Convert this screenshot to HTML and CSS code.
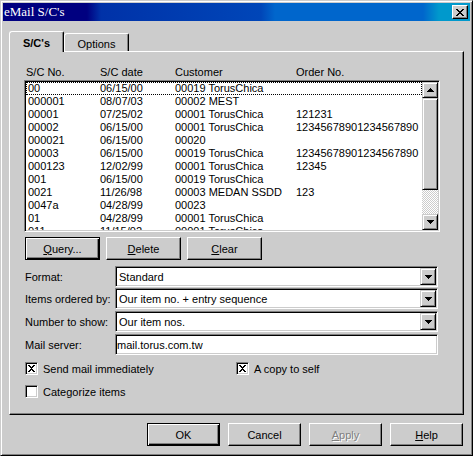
FILE: index.html
```html
<!DOCTYPE html>
<html>
<head>
<meta charset="utf-8">
<title>eMail S/C's</title>
<link rel="stylesheet" href="styles.css">
</head>
<body>
<div class="window">
  <div class="titlebar">
    <span class="title">eMail S/C's</span>
    <div class="close">
      <svg width="8" height="7" viewBox="0 0 8 7" shape-rendering="crispEdges"><path d="M0 0h2v1h1v1h2v-1h1v-1h2v1h-1v1h-1v1h-1v1h1v1h1v1h1v1h-2v-1h-1v-1h-2v1h-1v1h-2v-1h1v-1h1v-1h1v-1h-1v-1h-1v-1h-1z" fill="#000"/></svg>
    </div>
  </div>
  <div class="content">
    <div class="tabs">
      <div class="tab active">S/C's</div>
      <div class="tab">Options</div>
    </div>
    <div class="panel">
      <div class="list-header">
        <span>S/C No.</span><span>S/C date</span><span>Customer</span><span>Order No.</span>
      </div>
      <div class="listbox">
        <div class="rows">
          <div class="row focus"><span>00</span><span>06/15/00</span><span>00019 TorusChica</span><span></span></div>
          <div class="row"><span>000001</span><span>08/07/03</span><span>00002 MEST</span><span></span></div>
          <div class="row"><span>00001</span><span>07/25/02</span><span>00001 TorusChica</span><span>121231</span></div>
          <div class="row"><span>00002</span><span>06/15/00</span><span>00001 TorusChica</span><span>12345678901234567890</span></div>
          <div class="row"><span>000021</span><span>06/15/00</span><span>00020</span><span></span></div>
          <div class="row"><span>00003</span><span>06/15/00</span><span>00019 TorusChica</span><span>12345678901234567890</span></div>
          <div class="row"><span>000123</span><span>12/02/99</span><span>00001 TorusChica</span><span>12345</span></div>
          <div class="row"><span>001</span><span>06/15/00</span><span>00019 TorusChica</span><span></span></div>
          <div class="row"><span>0021</span><span>11/26/98</span><span>00003 MEDAN SSDD</span><span>123</span></div>
          <div class="row"><span>0047a</span><span>04/28/99</span><span>00023</span><span></span></div>
          <div class="row"><span>01</span><span>04/28/99</span><span>00001 TorusChica</span><span></span></div>
          <div class="row"><span>011</span><span>11/15/02</span><span>00001 TorusChica</span><span></span></div>
        </div>
        <div class="vscroll">
          <div class="sbtn"><svg width="7" height="4" viewBox="0 0 7 4" shape-rendering="crispEdges"><path d="M3 0h1v1h1v1h1v1h1v1h-7v-1h1v-1h1v-1h1z" fill="#000"/></svg></div>
          <div class="thumb"></div>
          <div class="track"></div>
          <div class="sbtn"><svg width="7" height="4" viewBox="0 0 7 4" shape-rendering="crispEdges"><path d="M0 0h7v1h-1v1h-1v1h-1v1h-1v-1h-1v-1h-1v-1h-1z" fill="#000"/></svg></div>
        </div>
      </div>
      <div class="btnrow">
        <div class="btn default"><span><u>Q</u>uery...</span></div>
        <div class="btn"><span><u>D</u>elete</span></div>
        <div class="btn"><span><u>C</u>lear</span></div>
      </div>
      <div class="field-row r1">
        <span class="label">Format:</span>
        <div class="combo"><span class="val">Standard</span><span class="drop"><svg width="7" height="4" viewBox="0 0 7 4" shape-rendering="crispEdges"><path d="M0 0h7v1h-1v1h-1v1h-1v1h-1v-1h-1v-1h-1v-1h-1z" fill="#000"/></svg></span></div>
      </div>
      <div class="field-row r2">
        <span class="label">Items ordered by:</span>
        <div class="combo"><span class="val">Our item no. + entry sequence</span><span class="drop"><svg width="7" height="4" viewBox="0 0 7 4" shape-rendering="crispEdges"><path d="M0 0h7v1h-1v1h-1v1h-1v1h-1v-1h-1v-1h-1v-1h-1z" fill="#000"/></svg></span></div>
      </div>
      <div class="field-row r3">
        <span class="label">Number to show:</span>
        <div class="combo"><span class="val">Our item nos.</span><span class="drop"><svg width="7" height="4" viewBox="0 0 7 4" shape-rendering="crispEdges"><path d="M0 0h7v1h-1v1h-1v1h-1v1h-1v-1h-1v-1h-1v-1h-1z" fill="#000"/></svg></span></div>
      </div>
      <div class="field-row r4">
        <span class="label">Mail server:</span>
        <div class="textbox">mail.torus.com.tw</div>
      </div>
      <div class="check-row c1">
        <div class="check left"><span class="box"><svg width="9" height="9" viewBox="0 0 9 9" shape-rendering="crispEdges"><path d="M1 1h2v1h1v1h1v-1h1v-1h2v1h-1v1h-1v1h-1v1h1v1h1v1h1v1h-2v-1h-1v-1h-1v1h-1v1h-2v-1h1v-1h1v-1h1v-1h-1v-1h-1v-1h-1z" fill="#000"/></svg></span><span>Send mail immediately</span></div>
        <div class="check"><span class="box"><svg width="9" height="9" viewBox="0 0 9 9" shape-rendering="crispEdges"><path d="M1 1h2v1h1v1h1v-1h1v-1h2v1h-1v1h-1v1h-1v1h1v1h1v1h1v1h-2v-1h-1v-1h-1v1h-1v1h-2v-1h1v-1h1v-1h1v-1h-1v-1h-1v-1h-1z" fill="#000"/></svg></span><span>A copy to self</span></div>
      </div>
      <div class="check-row c2">
        <div class="check left"><span class="box"></span><span>Categorize items</span></div>
      </div>
    </div>
    <div class="footer">
      <div class="btn default"><span>OK</span></div>
      <div class="btn"><span>Cancel</span></div>
      <div class="btn disabled"><span><u>A</u>pply</span></div>
      <div class="btn"><span><u>H</u>elp</span></div>
    </div>
  </div>
</div>
</body>
</html>
```
FILE: styles.css
```css
* { box-sizing: border-box; }

body {
  margin: 0;
  background: #cccccc;
  font-family: "Liberation Sans", Arial, sans-serif;
  font-size: 11px;
  color: #000;
}

.window {
  width: 473px;
  height: 456px;
  background: #cccccc;
  border: 1px solid;
  border-color: #cccccc #000 #000 #cccccc;
  box-shadow: inset 1px 1px #fff, inset -1px -1px #808080;
  padding: 2px;
  display: flex;
  flex-direction: column;
}

.titlebar {
  height: 18px;
  display: flex;
  align-items: center;
  justify-content: space-between;
  padding: 0 2px 0 1px;
  background: linear-gradient(to right,
    #000080 0px, #000080 84px, #0032a8 98px, #0046b8 258px,
    #0066cc 272px, #0066cc 420px, #0099cc 436px, #0099cc 100%);
}

.title {
  font-family: "Liberation Serif", "Times New Roman", serif;
  font-size: 13px;
  color: #fff;
  line-height: 18px;
}

.close {
  width: 16px;
  height: 14px;
  background: #cccccc;
  border: 1px solid;
  border-color: #fff #000 #000 #fff;
  box-shadow: inset -1px -1px #808080;
  display: flex;
  align-items: center;
  justify-content: center;
  padding-left: 0;
}

.content {
  padding: 10px 6px 0 6px;
  display: flex;
  flex-direction: column;
}

.tabs {
  display: flex;
  align-items: flex-end;
  height: 20px;
  position: relative;
  z-index: 1;
}

.tab {
  height: 18px;
  width: 65px;
  background: #cccccc;
  border: 1px solid;
  border-bottom: none;
  border-color: #fff #000 #000 #fff;
  box-shadow: inset -1px 0 #808080;
  border-radius: 3px 2px 0 0;
  display: flex;
  align-items: center;
  justify-content: center;
  padding-top: 2px;
}

.tab.active {
  width: 55px;
  height: 21px;
  margin-bottom: -1px;
  font-weight: bold;
  padding-top: 1px;
}

.panel {
  height: 364px;
  border: 1px solid;
  border-color: #fff #000 #000 #fff;
  box-shadow: inset -1px -1px #808080;
  padding: 14px 0 0 14px;
  display: flex;
  flex-direction: column;
}

.list-header {
  display: grid;
  grid-template-columns: 74px 75px 121px 1fr;
  padding-left: 2px;
  height: 13px;
  line-height: 13px;
}

.listbox {
  margin-top: 1px;
  width: 416px;
  height: 152px;
  border: 1px solid;
  border-color: #808080 #fff #fff #808080;
  box-shadow: inset 1px 1px #000, inset -1px -1px #cccccc;
  padding: 1px;
  display: flex;
  background: #fff;
}

.rows {
  flex: 1;
  overflow: hidden;
}

.row {
  display: grid;
  grid-template-columns: 72px 75px 121px 1fr;
  padding-left: 2px;
  height: 13px;
  line-height: 13px;
  white-space: nowrap;
}

.row.focus {
  outline: 1px dotted #000;
  outline-offset: -1px;
}

.vscroll {
  width: 16px;
  display: flex;
  flex-direction: column;
}

.sbtn, .thumb {
  background: #cccccc;
  border: 1px solid;
  border-color: #cccccc #000 #000 #cccccc;
  box-shadow: inset 1px 1px #fff, inset -1px -1px #808080;
}

.sbtn {
  height: 16px;
  display: flex;
  align-items: center;
  justify-content: center;
}

.thumb {
  height: 92px;
}

.track {
  flex: 1;
  background: repeating-conic-gradient(#fff 0 25%, #cccccc 0 50%) 0 0 / 2px 2px;
}

.btnrow {
  display: flex;
  gap: 6px;
  margin-top: 5px;
  margin-left: 1px;
}

.btn {
  width: 75px;
  height: 23px;
  background: #cccccc;
  border: 1px solid;
  border-color: #fff #000 #000 #fff;
  box-shadow: inset -1px -1px #808080;
  display: flex;
  align-items: center;
  justify-content: center;
}

.btn.default {
  border-color: #000;
  box-shadow: inset 1px 1px #fff, inset -1px -1px #000, inset -2px -2px #808080;
}

.btn.disabled {
  color: #808080;
  text-shadow: 1px 1px #fff;
}

.field-row {
  display: flex;
  align-items: center;
  height: 21px;
}

.field-row.r1 { margin-top: 6px; }
.field-row.r2 { margin-top: 1px; }
.field-row.r3 { margin-top: 2px; }
.field-row.r4 { margin-top: 2px; }

.label {
  width: 91px;
  padding-left: 1px;
}

.combo, .textbox {
  width: 323px;
  height: 21px;
  background: #fff;
  border: 1px solid;
  border-color: #808080 #fff #fff #808080;
  box-shadow: inset 1px 1px #000, inset -1px -1px #cccccc;
  padding: 1px;
  display: flex;
  align-items: center;
}

.combo .val {
  flex: 1;
  padding-left: 2px;
}

.drop {
  width: 16px;
  height: 17px;
  background: #cccccc;
  border: 1px solid;
  border-color: #cccccc #000 #000 #cccccc;
  box-shadow: inset 1px 1px #fff, inset -1px -1px #808080;
  display: flex;
  align-items: center;
  justify-content: center;
}

.textbox {
  padding-left: 1px;
}

.check-row {
  display: flex;
  height: 13px;
  margin-left: 1px;
}

.check-row.c1 { margin-top: 7px; }
.check-row.c2 { margin-top: 10px; }

.check {
  display: flex;
  align-items: center;
  gap: 5px;
  height: 13px;
}

.check.left {
  width: 211px;
}

.box {
  width: 13px;
  height: 13px;
  background: #fff;
  border: 1px solid;
  border-color: #808080 #fff #fff #808080;
  box-shadow: inset 1px 1px #000, inset -1px -1px #cccccc;
  display: flex;
  align-items: center;
  justify-content: center;
}

.footer {
  display: flex;
  justify-content: flex-end;
  gap: 8px;
  margin-top: 8px;
  margin-right: 1px;
}

.footer .btn {
  width: 73px;
}
```
